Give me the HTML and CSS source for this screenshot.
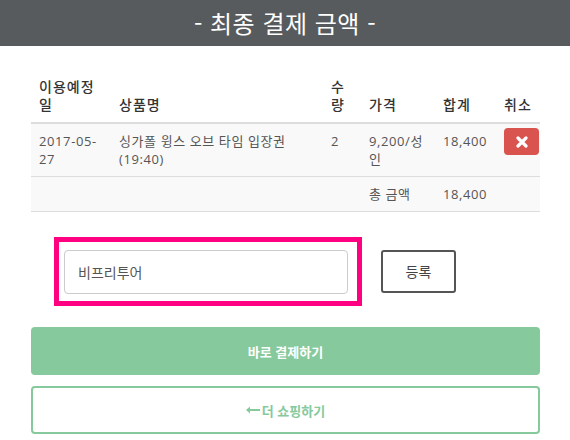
FILE: index.html
```html
<!DOCTYPE html>
<html lang="ko">
<head>
<meta charset="utf-8">
<link rel="stylesheet" href="styles.css">
</head>
<body>
<header class="top">
  <h1 class="title">- 최종 결제 금액 -</h1>
</header>
<main class="wrap">
  <table class="cart">
    <colgroup>
      <col class="c-date"><col class="c-name"><col class="c-qty"><col class="c-price"><col class="c-sum"><col class="c-del">
    </colgroup>
    <thead>
      <tr>
        <th>이용예정일</th>
        <th>상품명</th>
        <th>수량</th>
        <th>가격</th>
        <th>합계</th>
        <th>취소</th>
      </tr>
    </thead>
    <tbody>
      <tr class="striped">
        <td>2017-05-27</td>
        <td>싱가폴 윙스 오브 타임 입장권 (19:40)</td>
        <td>2</td>
        <td>9,200/성인</td>
        <td>18,400</td>
        <td>
          <button class="del" type="button" aria-label="취소">
            <svg width="12" height="12" viewBox="0 0 12 12"><path d="M2 2 L10 10 M10 2 L2 10" stroke="#fff" stroke-width="3.2" stroke-linecap="round"/></svg>
          </button>
        </td>
      </tr>
      <tr class="striped">
        <td></td>
        <td></td>
        <td></td>
        <td>총 금액</td>
        <td>18,400</td>
        <td></td>
      </tr>
    </tbody>
  </table>

  <div class="coupon">
    <div class="highlight">
      <input class="code" type="text" value="비프리투어">
    </div>
    <button class="reg" type="button">등록</button>
  </div>

  <button class="pay" type="button">바로 결제하기</button>
  <button class="more" type="button">
    <svg class="arrow" width="14" height="8" viewBox="0 0 14 8"><path d="M1 4 H14" stroke="#86c99c" stroke-width="2"/><path d="M0 4 L4 0.5 V7.5 Z" fill="#86c99c"/></svg>더 쇼핑하기
  </button>
</main>
</body>
</html>
```
FILE: styles.css
```css
* { box-sizing: border-box; }
body {
  margin: 0;
  background: #fff;
  font-family: "Open Sans", "Noto Sans CJK KR", sans-serif;
  font-size: 13px;
  color: #555;
}
.top {
  background: #585b5e;
  height: 46px;
  display: flex;
  align-items: center;
  justify-content: center;
}
.title {
  margin: 0;
  color: #fff;
  font-family: "Noto Sans CJK KR", sans-serif;
  font-weight: 400;
  font-size: 24px;
  line-height: 46px;
  letter-spacing: 0.5px;
}
.wrap {
  padding: 24px 30px 0 31px;
}
.cart {
  width: 509px;
  border-collapse: collapse;
  table-layout: fixed;
}
.c-date { width: 80px; }
.c-name { width: 212px; }
.c-qty { width: 38px; }
.c-price { width: 74px; }
.c-sum { width: 61px; }
.c-del { width: 44px; }
.cart th, .cart td {
  padding: 8px;
  text-align: left;
  vertical-align: top;
  line-height: 18px;
  word-break: keep-all;
}
.cart th {
  color: #333;
  font-weight: 500;
  font-size: 14px;
  letter-spacing: 1px;
  vertical-align: bottom;
  border-bottom: 2px solid #ddd;
  word-break: break-all;
}
.cart td {
  border-bottom: 1px solid #ddd;
  letter-spacing: 0.6px;
}
.cart td:nth-child(4) { word-break: break-all; }
.striped { background: #f9f9f9; }
.del {
  display: flex;
  align-items: center;
  justify-content: center;
  width: 35px;
  height: 27px;
  margin-top: -4px;
  padding: 0;
  border: 0;
  border-radius: 4px;
  background: #d9534f;
}
.coupon {
  display: flex;
  align-items: center;
  gap: 19px;
  margin: 25px 0 0 23px;
}
.highlight {
  width: 308px;
  border: 5px solid #ff0080;
  padding: 8px 9px 7px 5px;
}
.code {
  display: block;
  width: 284px;
  height: 44px;
  border: 1px solid #ccc;
  border-radius: 4px;
  padding: 0 13px;
  font-family: "Noto Sans CJK KR", sans-serif;
  font-size: 14px;
  color: #555;
  background: #fff;
}
.reg {
  width: 75px;
  height: 43px;
  border: 2px solid #555;
  border-radius: 3px;
  background: #fff;
  font-family: "Noto Sans CJK KR", sans-serif;
  font-size: 14px;
  color: #444;
  margin-top: -1px;
}
.pay, .more {
  display: flex;
  align-items: center;
  justify-content: center;
  width: 509px;
  height: 48px;
  border-radius: 4px;
  font-family: "Noto Sans CJK KR", sans-serif;
  font-size: 13px;
  font-weight: 700;
}
.pay {
  margin-top: 21px;
  background: #86c99c;
  border: 0;
  color: #fff;
}
.more {
  margin-top: 11px;
  background: #fff;
  border: 2px solid #86c99c;
  color: #86c99c;
}
.arrow { margin-right: 2px; }
```
